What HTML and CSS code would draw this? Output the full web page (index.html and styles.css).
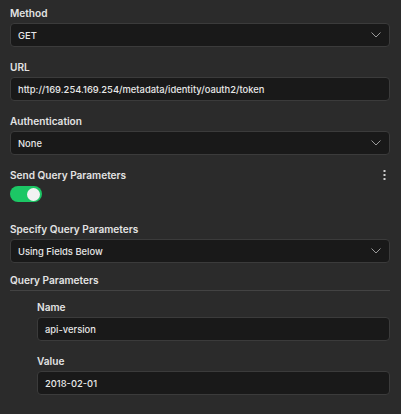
FILE: index.html
```html
<!DOCTYPE html>
<html>
<head>
<meta charset="utf-8">
<link rel="stylesheet" href="styles.css">
</head>
<body>
<div class="panel">
  <div class="field">
    <div class="label">Method</div>
    <div class="input select"><span>GET</span><svg class="chev" width="10" height="6" viewBox="0 0 10 6"><path d="M0.5 0.5 L5 5 L9.5 0.5" fill="none" stroke="#9a9a9a" stroke-width="1"/></svg></div>
  </div>
  <div class="field">
    <div class="label">URL</div>
    <div class="input"><span>http://169.254.169.254/metadata/identity/oauth2/token</span></div>
  </div>
  <div class="field">
    <div class="label">Authentication</div>
    <div class="input select"><span>None</span><svg class="chev" width="10" height="6" viewBox="0 0 10 6"><path d="M0.5 0.5 L5 5 L9.5 0.5" fill="none" stroke="#9a9a9a" stroke-width="1"/></svg></div>
  </div>
  <div class="field toggle-field">
    <div class="label-row">
      <div class="label">Send Query Parameters</div>
      <svg class="kebab" width="3" height="10" viewBox="0 0 3 10"><rect x="0.5" y="0" width="2" height="2" fill="#cfcfcf"/><rect x="0.5" y="4" width="2" height="2" fill="#cfcfcf"/><rect x="0.5" y="8" width="2" height="2" fill="#cfcfcf"/></svg>
    </div>
    <div class="toggle"><div class="knob"></div></div>
  </div>
  <div class="field">
    <div class="label">Specify Query Parameters</div>
    <div class="input select"><span>Using Fields Below</span><svg class="chev" width="10" height="6" viewBox="0 0 10 6"><path d="M0.5 0.5 L5 5 L9.5 0.5" fill="none" stroke="#9a9a9a" stroke-width="1"/></svg></div>
  </div>
  <div class="section">
    <div class="label section-title">Query Parameters</div>
    <div class="params">
      <div class="field">
        <div class="label">Name</div>
        <div class="input"><span>api-version</span></div>
      </div>
      <div class="field">
        <div class="label">Value</div>
        <div class="input"><span>2018-02-01</span></div>
      </div>
    </div>
  </div>
</div>
</body>
</html>
```

FILE: styles.css
```css
html, body {
  margin: 0;
  padding: 0;
  background: #2b2b2b;
}
body {
  font-family: Inter, "Noto Sans", sans-serif;
  color: #e6e6e6;
  width: 401px;
  height: 414px;
  overflow: hidden;
}
.panel {
  padding: 6px 11px 0 10px;
  display: flex;
  flex-direction: column;
  gap: 13px;
}
.field {
  display: flex;
  flex-direction: column;
  gap: 3px;
}
.label {
  font-size: 10.1px;
  font-weight: 600;
  color: #e3e3e3;
  line-height: 14px;
}
.label-row {
  display: flex;
  justify-content: space-between;
  align-items: center;
  padding-right: 4px;
}
.input {
  height: 24px;
  box-sizing: border-box;
  background: #191919;
  border: 1px solid #3b3b3b;
  border-radius: 4px;
  display: flex;
  align-items: center;
  padding: 0 7px;
  font-size: 9.4px;
  color: #e8e8e8;
  font-weight: 500;
}
.select {
  justify-content: space-between;
  padding-right: 8px;
}
.chev {
  display: block;
}
.toggle-field {
  gap: 4px;
  margin-bottom: 7px;
}
.toggle {
  width: 32px;
  height: 16px;
  border-radius: 8px;
  background: #1cc765;
  position: relative;
}
.knob {
  position: absolute;
  top: 1.5px;
  right: 2px;
  width: 13px;
  height: 13px;
  border-radius: 50%;
  background: #f2f2f2;
}
.section {
  display: flex;
  flex-direction: column;
  margin-top: -3px;
}
.section-title {
  padding-bottom: 3px;
  border-bottom: 1px solid #434343;
}
.params {
  padding: 9px 0 0 27px;
  display: flex;
  flex-direction: column;
  gap: 13px;
}
```
